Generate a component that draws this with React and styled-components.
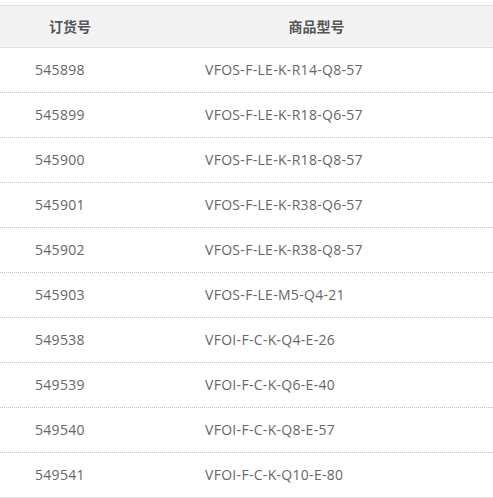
import React from "react";
import styled, { createGlobalStyle } from "styled-components";

const rows = [
  ["545898", "VFOS-F-LE-K-R14-Q8-57"],
  ["545899", "VFOS-F-LE-K-R18-Q6-57"],
  ["545900", "VFOS-F-LE-K-R18-Q8-57"],
  ["545901", "VFOS-F-LE-K-R38-Q6-57"],
  ["545902", "VFOS-F-LE-K-R38-Q8-57"],
  ["545903", "VFOS-F-LE-M5-Q4-21"],
  ["549538", "VFOI-F-C-K-Q4-E-26"],
  ["549539", "VFOI-F-C-K-Q6-E-40"],
  ["549540", "VFOI-F-C-K-Q8-E-57"],
  ["549541", "VFOI-F-C-K-Q10-E-80"],
];

function App() {
  return (
    <Wrapper>
      <GlobalStyle />
      <Head>
        <HeadCell $w="140px">订货号</HeadCell>
        <HeadCell $w="auto">商品型号</HeadCell>
      </Head>
      {rows.map(([code, model], i) => (
        <Row key={code} $last={i === rows.length - 1}>
          <Cell $w="140px" $pad="35px">{code}</Cell>
          <Cell $w="auto" $pad="65px">{model}</Cell>
        </Row>
      ))}
    </Wrapper>
  );
}

const GlobalStyle = createGlobalStyle`
  *, *::before, *::after {
    box-sizing: border-box;
  }
  body {
    margin: 0;
    background: #fff;
    font-family: "Open Sans", "Noto Sans CJK SC", sans-serif;
  }
`;

const Wrapper = styled.div`
  padding-top: 5px;
  width: 493px;
`;

const Head = styled.div`
  display: flex;
  height: 43px;
  background: #f3f3f3;
  border-top: 1px solid #e0e0e0;
  border-bottom: 1px solid #e0e0e0;
`;

const HeadCell = styled.div`
  flex: ${(p) => (p.$w === "auto" ? "1" : `0 0 ${p.$w}`)};
  display: flex;
  align-items: center;
  justify-content: center;
  padding-bottom: 2px;
  font-size: 14px;
  font-weight: 700;
  color: #555;
`;

const Row = styled.div`
  display: flex;
  height: 45px;
  border-bottom: 1px ${(p) => (p.$last ? "solid #e0e0e0" : "dotted #c4c4c4")};
`;

const Cell = styled.div`
  flex: ${(p) => (p.$w === "auto" ? "1" : `0 0 ${p.$w}`)};
  display: flex;
  align-items: center;
  padding-left: ${(p) => p.$pad};
  padding-bottom: 2px;
  font-size: 14px;
  letter-spacing: 0.3px;
  color: #666;
`;

export default App;
